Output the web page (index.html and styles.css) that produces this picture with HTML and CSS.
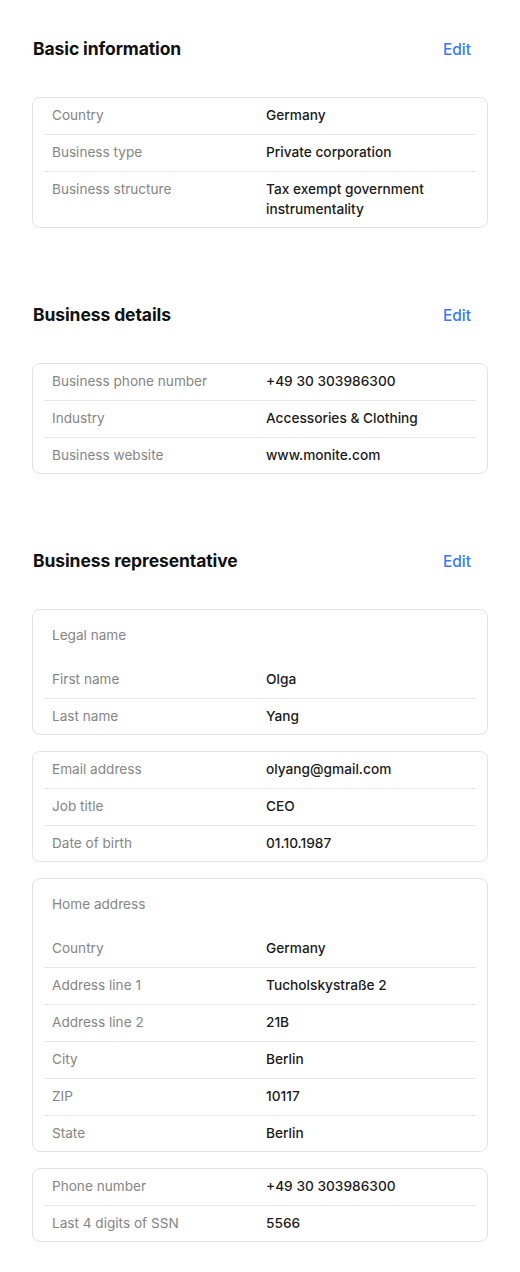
FILE: index.html
```html
<!DOCTYPE html>
<html lang="en">
<head>
    <meta charset="UTF-8">
    <meta name="viewport" content="width=device-width, initial-scale=1.0">
    <title>Business profile</title>
    <link rel="stylesheet" href="styles.css">
</head>
<body>
    <div class="page">
        <section class="section">
            <div class="section-head">
                <h2>Basic information</h2>
                <a class="edit" href="#">Edit</a>
            </div>
            <div class="card">
                <div class="row"><span class="label">Country</span><span class="value">Germany</span></div>
                <div class="row"><span class="label">Business type</span><span class="value">Private corporation</span></div>
                <div class="row"><span class="label">Business structure</span><span class="value">Tax exempt government instrumentality</span></div>
            </div>
        </section>

        <section class="section">
            <div class="section-head">
                <h2>Business details</h2>
                <a class="edit" href="#">Edit</a>
            </div>
            <div class="card">
                <div class="row"><span class="label">Business phone number</span><span class="value">+49 30 303986300</span></div>
                <div class="row"><span class="label">Industry</span><span class="value">Accessories &amp; Clothing</span></div>
                <div class="row"><span class="label">Business website</span><span class="value">www.monite.com</span></div>
            </div>
        </section>

        <section class="section">
            <div class="section-head">
                <h2>Business representative</h2>
                <a class="edit" href="#">Edit</a>
            </div>
            <div class="card">
                <div class="card-title">Legal name</div>
                <div class="row"><span class="label">First name</span><span class="value">Olga</span></div>
                <div class="row"><span class="label">Last name</span><span class="value">Yang</span></div>
            </div>
            <div class="card">
                <div class="row"><span class="label">Email address</span><span class="value">olyang@gmail.com</span></div>
                <div class="row"><span class="label">Job title</span><span class="value">CEO</span></div>
                <div class="row"><span class="label">Date of birth</span><span class="value">01.10.1987</span></div>
            </div>
            <div class="card">
                <div class="card-title">Home address</div>
                <div class="row"><span class="label">Country</span><span class="value">Germany</span></div>
                <div class="row"><span class="label">Address line 1</span><span class="value">Tucholskystraße 2</span></div>
                <div class="row"><span class="label">Address line 2</span><span class="value">21B</span></div>
                <div class="row"><span class="label">City</span><span class="value">Berlin</span></div>
                <div class="row"><span class="label">ZIP</span><span class="value">10117</span></div>
                <div class="row"><span class="label">State</span><span class="value">Berlin</span></div>
            </div>
            <div class="card">
                <div class="row"><span class="label">Phone number</span><span class="value">+49 30 303986300</span></div>
                <div class="row"><span class="label">Last 4 digits of SSN</span><span class="value">5566</span></div>
            </div>
        </section>
    </div>
</body>
</html>
```

FILE: styles.css
```css
body { margin: 0; background: #fff; font-family: Inter, "Noto Sans", sans-serif; color: #1a1a1a; }
.page { padding: 37px 32px 20px; }
.section { display: flex; flex-direction: column; gap: 16px; margin-bottom: 75px; }
.section:last-child { margin-bottom: 0; }
.section-head { display: flex; justify-content: space-between; align-items: center; height: 24px; margin-bottom: 20px; }
.section-head h2 { margin: 0 0 0 1px; font-size: 17.5px; font-weight: 700; line-height: 24px; color: #111; letter-spacing: -0.1px; }
.edit { color: #3a7cf2; text-decoration: none; font-size: 15.5px; font-weight: 500; margin-right: 17px; }
.card { border: 1px solid #e3e3e3; border-radius: 8px; padding: 0 11px; }
.card-title { padding: 15px 8px 17px; font-size: 13.6px; line-height: 20px; color: #858585; }
.row { display: flex; padding: 7px 8px 9px; font-size: 13.6px; line-height: 20px; border-bottom: 1px solid #e8e8e8; }
.row:last-child { border-bottom: none; padding-bottom: 8px; }
.label { width: 214px; flex: none; color: #858585; }
.value { flex: 1; color: #1a1a1a; font-weight: 500; font-size: 13.7px; }
```
